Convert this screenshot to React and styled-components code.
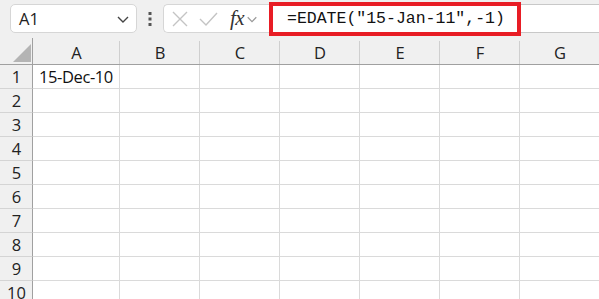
import React from 'react';
import styled, { createGlobalStyle } from 'styled-components';

const GlobalStyle = createGlobalStyle`
  body {
    margin: 0;
    background: #f0f0f0;
    font-family: "Open Sans", "Liberation Sans", sans-serif;
    overflow: hidden;
  }
`;

const Page = styled.div`
  width: 599px;
  height: 299px;
  overflow: hidden;
  background: #f0f0f0;
`;

const Toolbar = styled.div`
  display: flex;
  align-items: center;
  height: 38px;
  padding-left: 10px;
  box-sizing: border-box;
`;

const NameBox = styled.div`
  display: flex;
  align-items: center;
  justify-content: space-between;
  width: 127px;
  height: 29px;
  box-sizing: border-box;
  background: #fff;
  border: 1px solid #d6d6d6;
  border-radius: 5px;
  padding: 0 6px 0 8px;
  font-size: 16.5px;
  color: #222;
  margin-top: -1px;
`;

const Dots = styled.div`
  width: 26px;
  display: flex;
  justify-content: center;
`;

const FuncBox = styled.div`
  display: flex;
  align-items: center;
  width: 108px;
  height: 29px;
  box-sizing: border-box;
  background: #fff;
  border: 1px solid #d6d6d6;
  border-right: none;
  border-radius: 5px 0 0 5px;
  padding-left: 7px;
  gap: 9px;
  margin-top: -1px;
`;

const FxGroup = styled.span`
  display: flex;
  align-items: center;
  gap: 2px;
`;

const Fx = styled.span`
  font-family: "Liberation Serif", serif;
  font-style: italic;
  font-size: 21px;
  color: #333;
  margin-left: 3px;
  letter-spacing: -0.5px;
  line-height: 1;
`;

const FormulaWrap = styled.div`
  flex: 1;
  display: flex;
  align-items: center;
  height: 29px;
  margin-top: -1px;
  background: #fff;
  border-top: 1px solid #c8c8c8;
  border-bottom: 1px solid #c8c8c8;
  box-sizing: border-box;
`;

const Highlight = styled.div`
  width: 252px;
  height: 34px;
  box-sizing: border-box;
  border: 4px solid #e81d25;
  display: flex;
  align-items: center;
  padding-left: 14px;
  background: #fff;
  margin-left: -2px;
  font-family: "Liberation Mono", "DejaVu Sans Mono", monospace;
  font-size: 16.5px;
  color: #111;
  white-space: nowrap;
`;

const Sheet = styled.div`
  display: grid;
  grid-template-columns: 33px 87px repeat(6, 80px);
  grid-auto-rows: 24px;
  grid-template-rows: 27px;
  background: #fff;
`;

const Corner = styled.div`
  background: #f0f0f0;
  border-right: 1px solid #a0a0a0;
  border-bottom: 1px solid #a0a0a0;
  position: relative;
`;

const ColHead = styled.div`
  background: #f0f0f0;
  border-bottom: 1px solid #a0a0a0;
  display: flex;
  align-items: center;
  justify-content: center;
  font-size: 16.5px;
  color: #222;
  padding-top: 2px;
  box-sizing: border-box;
  position: relative;
  &::after {
    content: '';
    position: absolute;
    right: 0;
    top: 3px;
    bottom: 0;
    width: 1px;
    background: #cfcfcf;
  }
`;

const RowHead = styled.div`
  background: #f0f0f0;
  border-right: 1px solid #a0a0a0;
  border-bottom: 1px solid #d4d4d4;
  display: flex;
  align-items: center;
  justify-content: center;
  font-size: 16.5px;
  color: #222;
  padding-left: 1px;
`;

const Cell = styled.div`
  border-right: 1px solid #dadada;
  border-bottom: 1px solid #dadada;
  display: flex;
  align-items: center;
  padding-left: 6px;
  font-family: "Open Sans", "Liberation Sans", sans-serif;
  font-size: 16.5px;
  color: #111;
  letter-spacing: -0.4px;
  white-space: nowrap;
`;

const cols = ['A', 'B', 'C', 'D', 'E', 'F', 'G'];
const rows = [1, 2, 3, 4, 5, 6, 7, 8, 9, 10];

const Chevron = ({ size = 14, color = '#444' }) => (
  <svg width={size} height={size} viewBox="0 0 14 14">
    <path d="M2 5 L7 10 L12 5" fill="none" stroke={color} strokeWidth="1.4" />
  </svg>
);

export default function App() {
  return (
    <Page>
      <GlobalStyle />
      <Toolbar>
        <NameBox>
          <span>A1</span>
          <Chevron />
        </NameBox>
        <Dots>
          <svg width="4" height="16" viewBox="0 0 4 16">
            <rect x="0.5" y="1" width="3" height="3" fill="#555" />
            <rect x="0.5" y="6.5" width="3" height="3" fill="#555" />
            <rect x="0.5" y="12" width="3" height="3" fill="#555" />
          </svg>
        </Dots>
        <FuncBox>
          <svg width="18" height="18" viewBox="0 0 18 18">
            <path d="M2 2 L16 16 M16 2 L2 16" stroke="#c4c4c4" strokeWidth="1.4" />
          </svg>
          <svg width="20" height="18" viewBox="0 0 20 18">
            <path d="M2 9 L8 15 L19 3" fill="none" stroke="#c4c4c4" strokeWidth="1.4" />
          </svg>
          <FxGroup>
            <Fx>fx</Fx>
            <Chevron size={12} color="#999" />
          </FxGroup>
        </FuncBox>
        <FormulaWrap>
          <Highlight>=EDATE("15-Jan-11",-1)</Highlight>
        </FormulaWrap>
      </Toolbar>
      <Sheet>
        <Corner>
          <svg width="19" height="19" viewBox="0 0 19 19" style={{ position: 'absolute', left: 13, top: 6 }}>
            <polygon points="18,0 18,18 0,18" fill="#b4b4b4" />
          </svg>
        </Corner>
        {cols.map(c => <ColHead key={c}>{c}</ColHead>)}
        {rows.map(r => (
          <React.Fragment key={r}>
            <RowHead>{r}</RowHead>
            {cols.map(c => (
              <Cell key={c}>{r === 1 && c === 'A' ? '15-Dec-10' : ''}</Cell>
            ))}
          </React.Fragment>
        ))}
      </Sheet>
    </Page>
  );
}
